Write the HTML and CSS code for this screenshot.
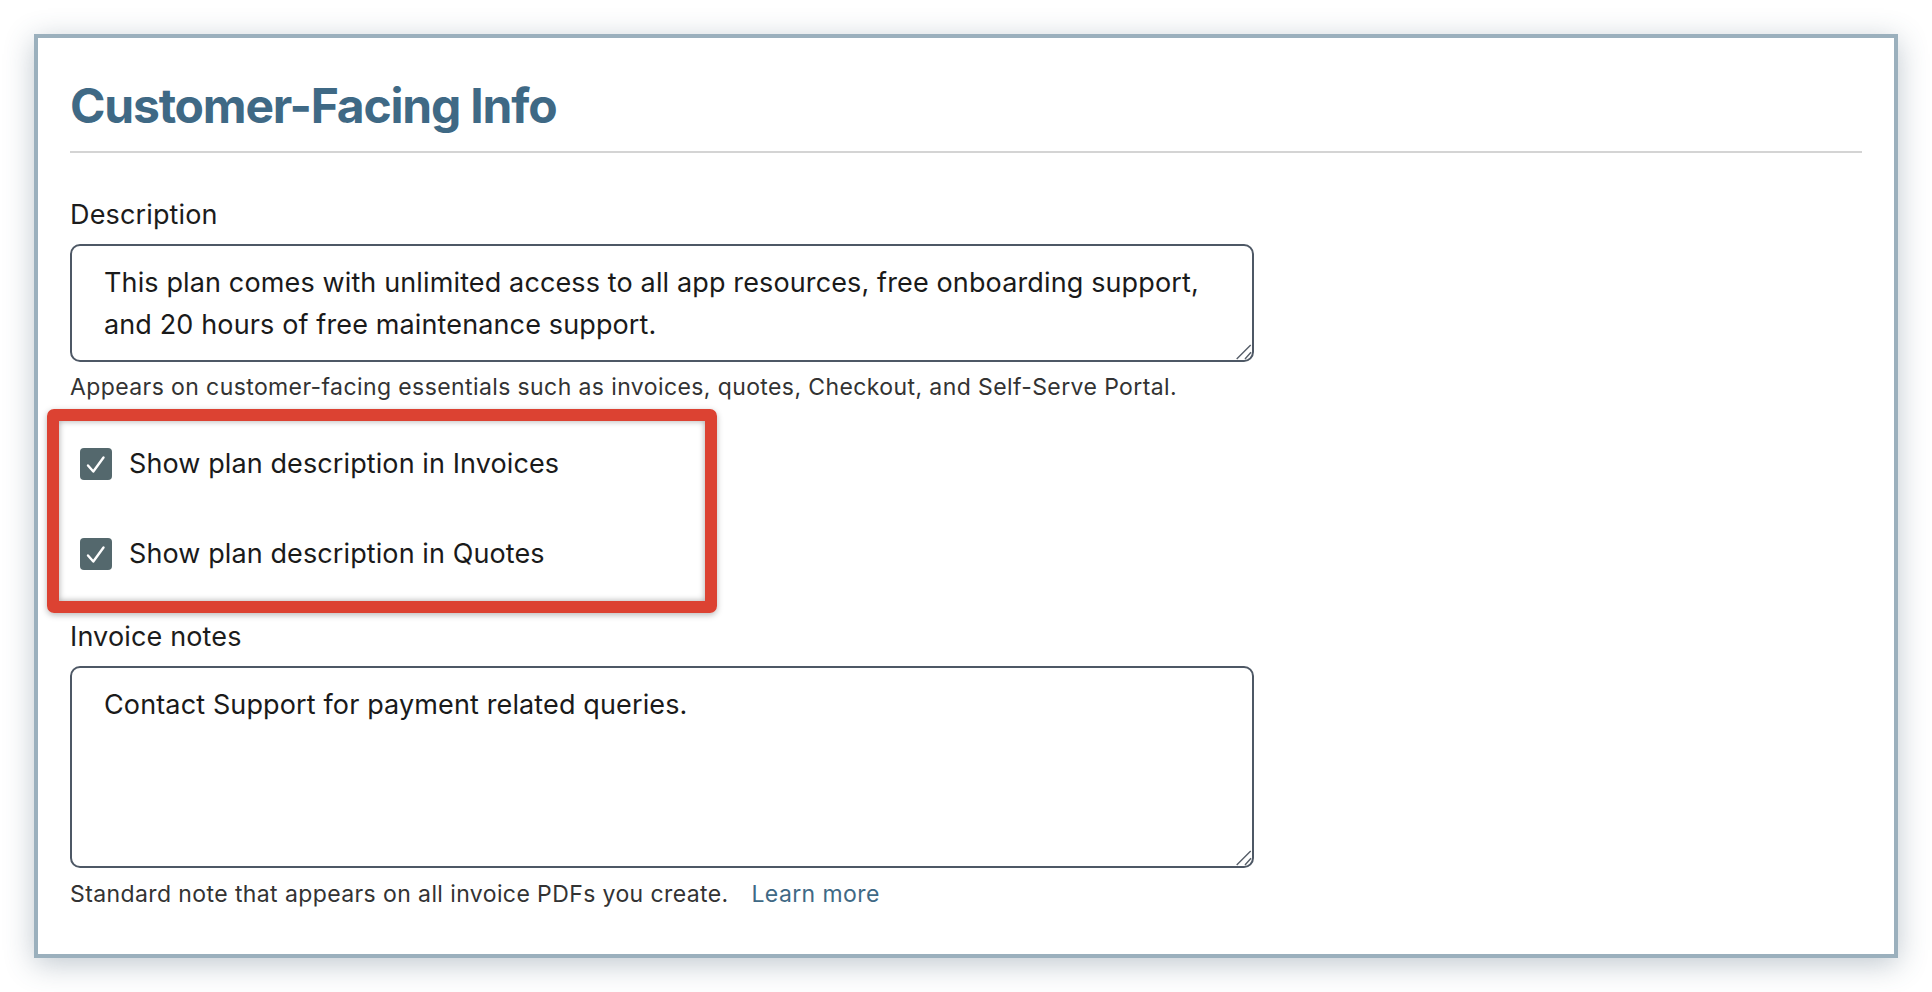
FILE: index.html
```html
<!DOCTYPE html>
<html lang="en">
<head>
<meta charset="utf-8">
<title>Customer-Facing Info</title>
<link rel="stylesheet" href="styles.css">
</head>
<body>
<section class="panel">
  <h1 class="panel-title">Customer-Facing Info</h1>

  <div class="field">
    <label class="field-label" for="desc">Description</label>
    <textarea id="desc" class="field-input field-input--short" readonly>This plan comes with unlimited access to all app resources, free onboarding support, and 20 hours of free maintenance support.</textarea>
    <p class="field-help">Appears on customer-facing essentials such as invoices, quotes, Checkout, and Self-Serve Portal.</p>
  </div>

  <div class="checks">
    <label class="check">
      <span class="check-box"><svg viewBox="0 0 32 32" width="32" height="32"><path d="M8 17.5 L13.3 23.5 L23.5 9.5" fill="none" stroke="#fff" stroke-width="2.4" stroke-linecap="round" stroke-linejoin="round"/></svg></span>
      <span class="check-text">Show plan description in Invoices</span>
    </label>
    <label class="check">
      <span class="check-box"><svg viewBox="0 0 32 32" width="32" height="32"><path d="M8 17.5 L13.3 23.5 L23.5 9.5" fill="none" stroke="#fff" stroke-width="2.4" stroke-linecap="round" stroke-linejoin="round"/></svg></span>
      <span class="check-text">Show plan description in Quotes</span>
    </label>
    <div class="highlight" aria-hidden="true"></div>
  </div>

  <div class="field">
    <label class="field-label" for="notes">Invoice notes</label>
    <textarea id="notes" class="field-input field-input--tall" readonly>Contact Support for payment related queries.</textarea>
    <p class="field-help">Standard note that appears on all invoice PDFs you create. <a class="field-link" href="#">Learn more</a></p>
  </div>
</section>
</body>
</html>
```

FILE: styles.css
```css
html, body {
  background: #ffffff;
}

body {
  margin: 0;
  padding: 34px 34px 40px;
  font-family: Inter, "Noto Sans", "Liberation Sans", sans-serif;
  color: #1c1c1c;
}

.panel {
  box-sizing: border-box;
  width: 1864px;
  border: 4px solid #9bb0bd;
  background: #ffffff;
  padding: 39px 32px 46px;
  box-shadow: 0 6px 28px rgba(60, 85, 105, 0.32);
}

.panel-title {
  margin: 0;
  font-size: 48px;
  line-height: 58px;
  font-weight: 700;
  letter-spacing: -1.2px;
  color: #3f6985;
  padding-bottom: 16px;
  border-bottom: 2px solid #d4d4d4;
}

.field {
  display: flex;
  flex-direction: column;
  align-items: flex-start;
}

.field-label {
  margin-top: 46px;
  margin-bottom: 13px;
  font-size: 27px;
  line-height: 32px;
  letter-spacing: 0.15px;
  color: #1c1c1c;
}

.checks + .field .field-label {
  margin-top: 0;
}

.field-input {
  box-sizing: border-box;
  width: 1184px;
  border: 2px solid #4e5865;
  border-radius: 10px;
  padding: 16px 32px;
  font-family: inherit;
  font-size: 27px;
  line-height: 42px;
  letter-spacing: 0.13px;
  color: #1a1a1a;
  background-color: #ffffff;
  background-image: url("data:image/svg+xml;utf8,<svg xmlns='http://www.w3.org/2000/svg' width='16' height='16' viewBox='0 0 16 16'><path d='M14.7 1 L0.7 15 M15 8.3 L9 15' stroke='%23575f69' stroke-width='1.4' fill='none'/></svg>");
  background-repeat: no-repeat;
  background-position: right 0 bottom 0;
  background-size: 16px 16px;
  overflow: hidden;
  resize: none;
  outline: none;
}

.field-input--short {
  height: 118px;
}

.field-input--tall {
  height: 202px;
}

.field-help {
  margin: 11px 0 0;
  font-size: 23px;
  line-height: 28px;
  letter-spacing: 0.4px;
  color: #333333;
}

.field-input--tall + .field-help {
  margin-top: 12px;
}

.field-link {
  margin-left: 16px;
  color: #3f6985;
  text-decoration: none;
}

.checks {
  position: relative;
  display: flex;
  flex-direction: column;
  gap: 58px;
  margin: 47px 0 51px;
}

.check {
  display: flex;
  align-items: center;
  gap: 17px;
  padding-left: 10px;
  font-size: 27px;
  line-height: 32px;
  letter-spacing: 0.1px;
  color: #1a1a1a;
}

.check-box {
  display: block;
  width: 32px;
  height: 32px;
  border-radius: 4px;
  background: #54686d;
}

.check-box svg {
  display: block;
}

.highlight {
  position: absolute;
  top: -39px;
  left: -23px;
  width: 670px;
  height: 204px;
  box-sizing: border-box;
  border: 12px solid #dc4232;
  border-radius: 7px;
  box-shadow: 0 2px 6px rgba(0, 0, 0, 0.28), inset 0 0 6px rgba(0, 0, 0, 0.35);
  pointer-events: none;
}
```
